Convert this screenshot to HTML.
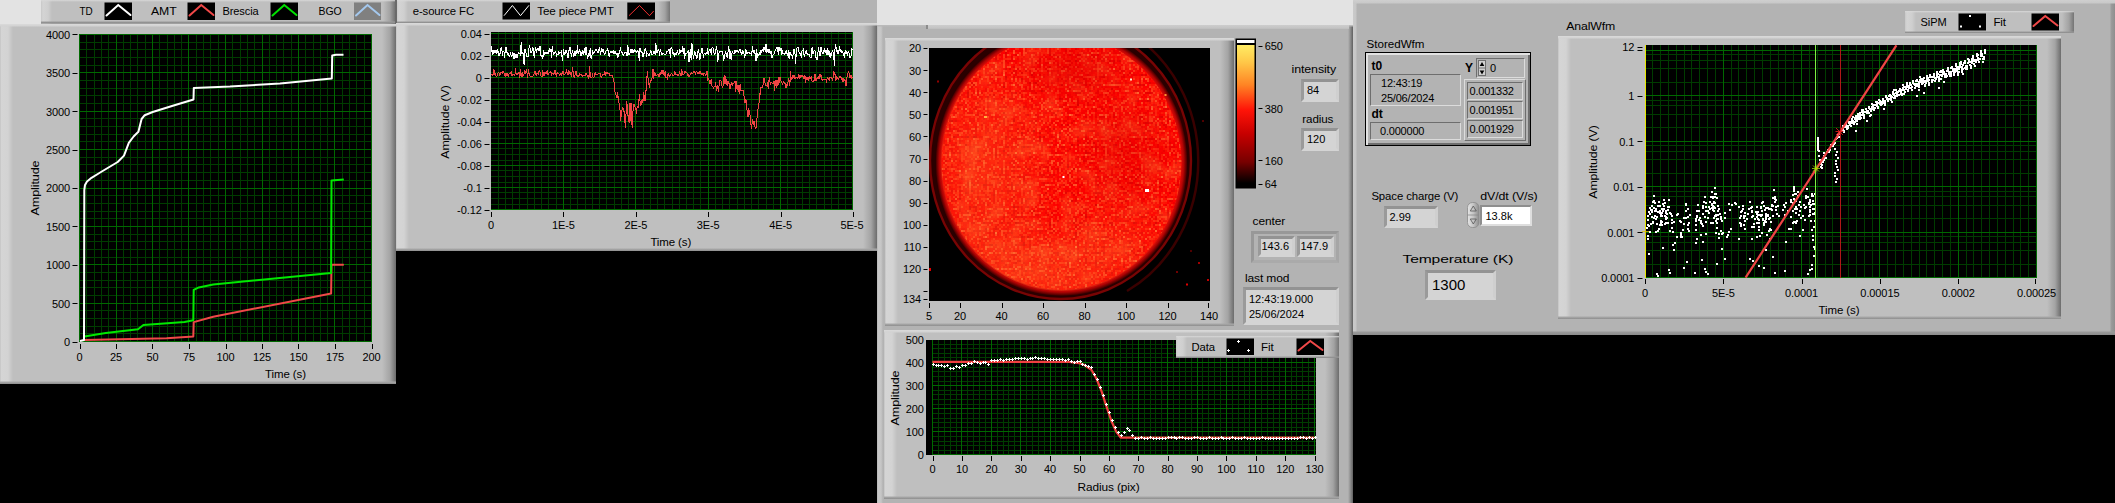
<!DOCTYPE html><html><head><meta charset="utf-8"><title>LabVIEW panels</title><style>
*{box-sizing:border-box}
html,body{margin:0;padding:0}
body{width:2115px;height:503px;background:#000;position:relative;overflow:hidden;font-family:"Liberation Sans", sans-serif;font-size:11px;color:#000}
.abs{position:absolute}
.frame{position:absolute;background:
 linear-gradient(to bottom,#dadada 0,#d2d2d2 2px,rgba(210,210,210,0) 3px) top/100% 3px no-repeat,
 linear-gradient(to top,#8e8e8e 0,#a8a8a8 2px,rgba(168,168,168,0) 3px) bottom/100% 3px no-repeat,
 linear-gradient(to right,#bdbdbd 0,#d5d5d5 1px,#d3d3d3 8px,#bfbfbf 13px,#bfbfbf calc(100% - 14px),#a4a4a4 calc(100% - 6px),#6c6c6c 100%);}
.legend{position:absolute;background:
 linear-gradient(to bottom,#d8d8d8 0,rgba(216,216,216,0) 2px) top/100% 2px no-repeat,
 linear-gradient(to top,#808080 0,#9a9a9a 1.5px,rgba(168,168,168,0) 2.5px) bottom/100% 2.5px no-repeat,
 linear-gradient(to right,#c8c8c8 0,#d4d4d4 2px,#cfcfcf 7px,#bfbfbf 11px,#bfbfbf calc(100% - 12px),#a2a2a2 calc(100% - 5px),#747474 100%);}
.ind{position:absolute;border:3.5px solid;border-color:#939393 #cfcfcf #d4d4d4 #9a9a9a;background:#d4d4d4;font-size:11px;line-height:1;white-space:nowrap}
.thin{position:absolute;letter-spacing:-0.2px;border:1px solid;border-color:#6e6e6e #dcdcdc #dcdcdc #6e6e6e;white-space:nowrap}
.lbl{position:absolute;white-space:nowrap;line-height:1}
svg{position:absolute;left:0;top:0;overflow:visible}
svg text{font-family:"Liberation Sans", sans-serif;font-size:11px;fill:#000;letter-spacing:-0.1px}
</style></head><body><div class="abs" style="left:0px;top:0px;width:41px;height:24px;background:#e3e3e3"></div><div class="abs" style="left:396px;top:0px;width:481px;height:23px;background:#b3b3b3"></div><div class="abs" style="left:877px;top:0px;width:476px;height:26px;background:#e3e3e3"></div><div class="frame" style="left:0px;top:23.5px;width:396px;height:360.5px;"></div><div class="legend" style="left:41px;top:0px;width:354px;height:23.5px;"></div><div class="abs" style="left:395px;top:0px;width:1.5px;height:24px;background:#6a6a6a"></div><svg width="2115" height="503" viewBox="0 0 2115 503"><rect x="104.5" y="2.5" width="27.5" height="17.5" fill="#000"/><polyline points="106.5,15.5 118.25,5.0 130.5,15.0" fill="none" stroke="#fff" stroke-width="2" stroke-linecap="round"/><rect x="187.5" y="2.5" width="27.5" height="17.5" fill="#000"/><polyline points="189.5,15.5 201.25,5.0 213.5,15.0" fill="none" stroke="#f04848" stroke-width="2" stroke-linecap="round"/><rect x="270.5" y="2.5" width="27.5" height="17.5" fill="#000"/><polyline points="272.5,15.5 284.25,5.0 296.5,15.0" fill="none" stroke="#00e000" stroke-width="2" stroke-linecap="round"/><rect x="354" y="2.5" width="27" height="17.5" fill="#808080"/><polyline points="356,15.5 367.5,5.0 379.5,15.0" fill="none" stroke="#a4c8ee" stroke-width="2" stroke-linecap="round"/><text x="92.5" y="15" text-anchor="end" textLength="13" lengthAdjust="spacingAndGlyphs">TD</text><text x="176.5" y="15" text-anchor="end" textLength="25.5" lengthAdjust="spacingAndGlyphs">AMT</text><text x="258.6" y="15" text-anchor="end" textLength="36.2" lengthAdjust="spacingAndGlyphs">Brescia</text><text x="341.6" y="15" text-anchor="end" textLength="23" lengthAdjust="spacingAndGlyphs">BGO</text><rect x="79" y="34" width="293" height="308" fill="#000"/><g shape-rendering="crispEdges" stroke-width="1"><path d="M79.5 34V342M86.5 34V342M94.5 34V342M101.5 34V342M108.5 34V342M116.5 34V342M123.5 34V342M130.5 34V342M137.5 34V342M145.5 34V342M152.5 34V342M159.5 34V342M167.5 34V342M174.5 34V342M181.5 34V342M188.5 34V342M196.5 34V342M203.5 34V342M210.5 34V342M218.5 34V342M225.5 34V342M232.5 34V342M240.5 34V342M247.5 34V342M254.5 34V342M262.5 34V342M269.5 34V342M276.5 34V342M283.5 34V342M291.5 34V342M298.5 34V342M305.5 34V342M313.5 34V342M320.5 34V342M327.5 34V342M334.5 34V342M342.5 34V342M349.5 34V342M356.5 34V342M364.5 34V342M371.5 34V342M79 341.5H372M79 333.5H372M79 326.5H372M79 318.5H372M79 310.5H372M79 303.5H372M79 295.5H372M79 287.5H372M79 280.5H372M79 272.5H372M79 264.5H372M79 257.5H372M79 249.5H372M79 241.5H372M79 234.5H372M79 226.5H372M79 218.5H372M79 211.5H372M79 203.5H372M79 195.5H372M79 188.5H372M79 180.5H372M79 172.5H372M79 164.5H372M79 157.5H372M79 149.5H372M79 141.5H372M79 134.5H372M79 126.5H372M79 118.5H372M79 111.5H372M79 103.5H372M79 95.5H372M79 88.5H372M79 80.5H372M79 72.5H372M79 65.5H372M79 57.5H372M79 49.5H372M79 42.5H372M79 34.5H372" stroke="#003c00" fill="none"/><path d="M79.5 34V342M116.5 34V342M152.5 34V342M188.5 34V342M225.5 34V342M262.5 34V342M298.5 34V342M334.5 34V342M371.5 34V342M79 341.5H372M79 303.5H372M79 264.5H372M79 226.5H372M79 188.5H372M79 149.5H372M79 111.5H372M79 72.5H372M79 34.5H372" stroke="#006800" fill="none"/></g><polyline points="84.3,340 166.6,338.2 193.3,336.4 193.7,322.1 213.2,316.7 331.1,293.5 331.5,264.8 343.8,264.8" fill="none" stroke="#f04848" stroke-width="2" stroke-linejoin="round" /><polyline points="84.3,336.4 105.8,332.9 138,329.3 143.4,325 184.5,322.1 193.3,320.3 193.7,289.9 198.8,287.4 213.2,284.5 331.1,273.1 331.5,180.5 343.8,179.5" fill="none" stroke="#00e800" stroke-width="2" stroke-linejoin="round" /><polyline points="80,341 84,340 84.3,190 85,185 87,181.5 91.5,177.8 99.4,173 101.8,171.5 117.7,162 124,155.6 128.8,142.9 133.6,136.5 138.4,131.8 141.6,119 144.7,115.2 152.7,112 172,106 193.5,99.5 193.8,88 230,86.6 280,83.5 331.8,78.5 332.2,55.5 336,54.7 343.5,54.7" fill="none" stroke="#fff" stroke-width="2" stroke-linejoin="round" /><text x="70" y="345.9" text-anchor="end">0</text><path d="M72.5 342.5H77.5" stroke="#000" stroke-width="1"/><text x="70" y="307.525" text-anchor="end">500</text><path d="M72.5 303.5H77.5" stroke="#000" stroke-width="1"/><text x="70" y="269.15" text-anchor="end">1000</text><path d="M72.5 265.5H77.5" stroke="#000" stroke-width="1"/><text x="70" y="230.775" text-anchor="end">1500</text><path d="M72.5 226.5H77.5" stroke="#000" stroke-width="1"/><text x="70" y="192.4" text-anchor="end">2000</text><path d="M72.5 188.5H77.5" stroke="#000" stroke-width="1"/><text x="70" y="154.025" text-anchor="end">2500</text><path d="M72.5 150.5H77.5" stroke="#000" stroke-width="1"/><text x="70" y="115.65" text-anchor="end">3000</text><path d="M72.5 111.5H77.5" stroke="#000" stroke-width="1"/><text x="70" y="77.275" text-anchor="end">3500</text><path d="M72.5 73.5H77.5" stroke="#000" stroke-width="1"/><text x="70" y="38.9" text-anchor="end">4000</text><path d="M72.5 34.5H77.5" stroke="#000" stroke-width="1"/><text x="79.5" y="361" text-anchor="middle">0</text><path d="M80.5 344V349" stroke="#000" stroke-width="1"/><text x="116.0" y="361" text-anchor="middle">25</text><path d="M116.5 344V349" stroke="#000" stroke-width="1"/><text x="152.5" y="361" text-anchor="middle">50</text><path d="M152.5 344V349" stroke="#000" stroke-width="1"/><text x="189.0" y="361" text-anchor="middle">75</text><path d="M189.5 344V349" stroke="#000" stroke-width="1"/><text x="225.5" y="361" text-anchor="middle">100</text><path d="M226.5 344V349" stroke="#000" stroke-width="1"/><text x="262.0" y="361" text-anchor="middle">125</text><path d="M262.5 344V349" stroke="#000" stroke-width="1"/><text x="298.5" y="361" text-anchor="middle">150</text><path d="M298.5 344V349" stroke="#000" stroke-width="1"/><text x="335.0" y="361" text-anchor="middle">175</text><path d="M335.5 344V349" stroke="#000" stroke-width="1"/><text x="371.5" y="361" text-anchor="middle">200</text><path d="M372.5 344V349" stroke="#000" stroke-width="1"/><text x="285.5" y="378" text-anchor="middle" textLength="40.8" lengthAdjust="spacingAndGlyphs">Time (s)</text><text x="39.3" y="188" text-anchor="middle" textLength="55" lengthAdjust="spacingAndGlyphs" transform="rotate(-90 39.3 188)">Amplitude</text></svg><div class="frame" style="left:396px;top:23px;width:481px;height:228px;"></div><div class="legend" style="left:397px;top:0px;width:273px;height:23px;"></div><svg width="2115" height="503" viewBox="0 0 2115 503"><rect x="502.5" y="2.5" width="27.5" height="17" fill="#000"/><polyline points="504,15.7 512.4,5.5 520.5,15.7 529,5.3" fill="none" stroke="#fff" stroke-width="1"/><rect x="627.3" y="2.5" width="27.7" height="17" fill="#000"/><polyline points="629,15.7 639.5,5.5 649.5,15.7 653.7,11" fill="none" stroke="#f03030" stroke-width="1"/><text x="412.7" y="15" text-anchor="start" textLength="61.3" lengthAdjust="spacingAndGlyphs">e-source FC</text><text x="537.2" y="15" text-anchor="start" textLength="76.5" lengthAdjust="spacingAndGlyphs">Tee piece PMT</text><rect x="491" y="32" width="362" height="178" fill="#000"/><g shape-rendering="crispEdges" stroke-width="1"><path d="M498.5 32V210M505.5 32V210M512.5 32V210M519.5 32V210M527.5 32V210M534.5 32V210M541.5 32V210M548.5 32V210M556.5 32V210M563.5 32V210M570.5 32V210M577.5 32V210M585.5 32V210M592.5 32V210M599.5 32V210M606.5 32V210M614.5 32V210M621.5 32V210M628.5 32V210M635.5 32V210M643.5 32V210M650.5 32V210M657.5 32V210M664.5 32V210M672.5 32V210M679.5 32V210M686.5 32V210M693.5 32V210M700.5 32V210M708.5 32V210M715.5 32V210M722.5 32V210M729.5 32V210M737.5 32V210M744.5 32V210M751.5 32V210M758.5 32V210M766.5 32V210M773.5 32V210M780.5 32V210M787.5 32V210M795.5 32V210M802.5 32V210M809.5 32V210M816.5 32V210M824.5 32V210M831.5 32V210M838.5 32V210M845.5 32V210M852.5 32V210M491 33.5H853M491 38.5H853M491 44.5H853M491 50.5H853M491 55.5H853M491 60.5H853M491 66.5H853M491 72.5H853M491 77.5H853M491 82.5H853M491 88.5H853M491 94.5H853M491 99.5H853M491 104.5H853M491 110.5H853M491 116.5H853M491 121.5H853M491 126.5H853M491 132.5H853M491 138.5H853M491 143.5H853M491 148.5H853M491 154.5H853M491 160.5H853M491 165.5H853M491 170.5H853M491 176.5H853M491 182.5H853M491 187.5H853M491 192.5H853M491 198.5H853M491 204.5H853M491 209.5H853" stroke="#003c00" fill="none"/><path d="M563.5 32V210M635.5 32V210M708.5 32V210M780.5 32V210M852.5 32V210M491 33.5H853M491 55.5H853M491 77.5H853M491 99.5H853M491 121.5H853M491 143.5H853M491 165.5H853M491 187.5H853M491 209.5H853" stroke="#006800" fill="none"/></g><g clip-path="url(#c2)"><clipPath id="c2"><rect x="491" y="32" width="362" height="178"/></clipPath><polyline points="491.0,75 491.7,74 492.4,75 493.2,75 493.9,69 494.6,75 495.3,73 496.0,76 496.8,77 497.5,73 498.2,73 498.9,72 499.6,76 500.4,74 501.1,72 501.8,73 502.5,73 503.2,71 504.0,73 504.7,75 505.4,77 506.1,73 506.8,76 507.6,74 508.3,77 509.0,74 509.7,73 510.4,74 511.2,71 511.9,76 512.6,75 513.3,74 514.0,75 514.8,76 515.5,69 516.2,75 516.9,73 517.6,75 518.4,73 519.1,72 519.8,78 520.5,70 521.2,74 522.0,77 522.7,72 523.4,76 524.1,74 524.8,70 525.6,74 526.3,69 527.0,73 527.7,78 528.4,69 529.2,74 529.9,76 530.6,76 531.3,76 532.0,76 532.8,77 533.5,74 534.2,74 534.9,71 535.6,73 536.4,76 537.1,73 537.8,73 538.5,75 539.2,70 540.0,72 540.7,76 541.4,76 542.1,77 542.8,70 543.6,76 544.3,76 545.0,72 545.7,74 546.4,74 547.2,70 547.9,75 548.6,73 549.3,73 550.0,72 550.8,71 551.5,76 552.2,73 552.9,74 553.6,75 554.4,72 555.1,70 555.8,74 556.5,77 557.2,72 558.0,74 558.7,73 559.4,75 560.1,75 560.8,73 561.6,75 562.3,73 563.0,71 563.7,75 564.4,74 565.2,74 565.9,73 566.6,70 567.3,74 568.0,75 568.8,70 569.5,74 570.2,72 570.9,75 571.6,77 572.4,67 573.1,72 573.8,76 574.5,78 575.2,74 576.0,71 576.7,75 577.4,77 578.1,75 578.8,77 579.6,74 580.3,75 581.0,74 581.7,75 582.4,76 583.2,76 583.9,75 584.6,76 585.3,76 586.0,73 586.8,75 587.5,76 588.2,75 588.9,79 589.6,66 590.4,77 591.1,77 591.8,78 592.5,74 593.2,78 594.0,77 594.7,74 595.4,73 596.1,75 596.8,74 597.6,75 598.3,73 599.0,74 599.7,73 600.4,73 601.2,78 601.9,76 602.6,74 603.3,74 604.0,75 604.8,71 605.5,76 606.2,73 606.9,72 607.6,74 608.4,74 609.1,73 609.8,76 610.5,75 611.2,75 612.0,75 612.7,76 613.4,81 614.1,82 614.8,92 615.6,93 616.3,96 617.0,98 617.7,92 618.4,101 619.2,104 619.9,108 620.6,121 621.3,114 622.0,110 622.8,107 623.5,111 624.2,111 624.9,122 625.6,128 626.4,101 627.1,104 627.8,114 628.5,119 629.2,123 630.0,103 630.7,121 631.4,103 632.1,128 632.8,114 633.6,104 634.3,104 635.0,107 635.7,107 636.4,114 637.2,106 637.9,108 638.6,107 639.3,94 640.0,101 640.8,106 641.5,103 642.2,99 642.9,103 643.6,92 644.4,97 645.1,101 645.8,90 646.5,90 647.2,71 648.0,78 648.7,82 649.4,88 650.1,82 650.8,81 651.6,79 652.3,77 653.0,69 653.7,79 654.4,72 655.2,73 655.9,76 656.6,75 657.3,75 658.0,74 658.8,77 659.5,76 660.2,72 660.9,75 661.6,70 662.4,74 663.1,70 663.8,75 664.5,75 665.2,71 666.0,78 666.7,77 667.4,80 668.1,73 668.8,76 669.6,76 670.3,75 671.0,74 671.7,73 672.4,75 673.2,75 673.9,76 674.6,72 675.3,73 676.0,75 676.8,74 677.5,75 678.2,76 678.9,74 679.6,72 680.4,74 681.1,76 681.8,69 682.5,75 683.2,74 684.0,74 684.7,71 685.4,72 686.1,72 686.8,72 687.6,76 688.3,74 689.0,77 689.7,75 690.4,75 691.2,72 691.9,74 692.6,73 693.3,73 694.0,71 694.8,72 695.5,75 696.2,71 696.9,72 697.6,74 698.4,72 699.1,74 699.8,71 700.5,73 701.2,73 702.0,75 702.7,73 703.4,76 704.1,73 704.8,73 705.6,76 706.3,74 707.0,71 707.7,81 708.4,79 709.2,80 709.9,84 710.6,81 711.3,79 712.0,86 712.8,86 713.5,89 714.2,86 714.9,87 715.6,82 716.4,91 717.1,85 717.8,88 718.5,92 719.2,84 720.0,80 720.7,80 721.4,83 722.1,86 722.8,88 723.6,81 724.3,75 725.0,84 725.7,76 726.4,82 727.2,86 727.9,81 728.6,84 729.3,83 730.0,89 730.8,85 731.5,83 732.2,86 732.9,83 733.6,84 734.4,82 735.1,81 735.8,92 736.5,82 737.2,90 738.0,85 738.7,90 739.4,94 740.1,84 740.8,91 741.6,90 742.3,90 743.0,90 743.7,91 744.4,102 745.2,103 745.9,99 746.6,108 747.3,112 748.0,117 748.8,108 749.5,115 750.2,115 750.9,124 751.6,129 752.4,119 753.1,125 753.8,121 754.5,123 755.2,128 756.0,128 756.7,120 757.4,115 758.1,108 758.8,107 759.6,93 760.3,95 761.0,87 761.7,88 762.4,87 763.2,84 763.9,78 764.6,80 765.3,85 766.0,85 766.8,86 767.5,83 768.2,89 768.9,81 769.6,78 770.4,85 771.1,82 771.8,83 772.5,83 773.2,84 774.0,81 774.7,91 775.4,81 776.1,80 776.8,88 777.6,80 778.3,85 779.0,77 779.7,83 780.4,77 781.2,82 781.9,83 782.6,85 783.3,81 784.0,82 784.8,82 785.5,87 786.2,88 786.9,84 787.6,86 788.4,78 789.1,80 789.8,86 790.5,72 791.2,79 792.0,79 792.7,75 793.4,78 794.1,75 794.8,79 795.6,77 796.3,77 797.0,77 797.7,79 798.4,74 799.2,79 799.9,75 800.6,78 801.3,75 802.0,77 802.8,75 803.5,78 804.2,79 804.9,75 805.6,83 806.4,77 807.1,77 807.8,80 808.5,80 809.2,76 810.0,79 810.7,78 811.4,77 812.1,82 812.8,81 813.6,81 814.3,80 815.0,74 815.7,81 816.4,81 817.2,77 817.9,79 818.6,77 819.3,79 820.0,74 820.8,77 821.5,76 822.2,81 822.9,79 823.6,80 824.4,79 825.1,79 825.8,79 826.5,83 827.2,77 828.0,78 828.7,79 829.4,81 830.1,77 830.8,77 831.6,77 832.3,81 833.0,78 833.7,71 834.4,74 835.2,74 835.9,81 836.6,77 837.3,78 838.0,79 838.8,79 839.5,76 840.2,76 840.9,77 841.6,80 842.4,78 843.1,82 843.8,78 844.5,81 845.2,80 846.0,86 846.7,80 847.4,73 848.1,73 848.8,71 849.6,78 850.3,77 851.0,75 851.7,79 852.4,77" fill="none" stroke="#f04444" stroke-width="1" stroke-linejoin="round" shape-rendering="crispEdges"/><polyline points="491.0,52 491.7,46 492.4,54 493.2,54 493.9,50 494.6,52 495.3,53 496.0,50 496.8,54 497.5,50 498.2,52 498.9,56 499.6,55 500.4,52 501.1,47 501.8,49 502.5,56 503.2,51 504.0,52 504.7,58 505.4,48 506.1,47 506.8,52 507.6,54 508.3,53 509.0,56 509.7,57 510.4,52 511.2,56 511.9,56 512.6,53 513.3,54 514.0,59 514.8,53 515.5,58 516.2,54 516.9,58 517.6,56 518.4,52 519.1,53 519.8,54 520.5,55 521.2,42 522.0,54 522.7,52 523.4,55 524.1,65 524.8,49 525.6,51 526.3,55 527.0,57 527.7,56 528.4,57 529.2,45 529.9,47 530.6,53 531.3,53 532.0,51 532.8,47 533.5,52 534.2,58 534.9,52 535.6,48 536.4,53 537.1,48 537.8,50 538.5,49 539.2,51 540.0,46 540.7,55 541.4,57 542.1,55 542.8,59 543.6,50 544.3,54 545.0,54 545.7,52 546.4,52 547.2,54 547.9,52 548.6,54 549.3,48 550.0,52 550.8,49 551.5,58 552.2,46 552.9,51 553.6,55 554.4,53 555.1,52 555.8,51 556.5,57 557.2,54 558.0,55 558.7,51 559.4,53 560.1,53 560.8,52 561.6,51 562.3,61 563.0,55 563.7,49 564.4,55 565.2,53 565.9,50 566.6,51 567.3,54 568.0,58 568.8,52 569.5,47 570.2,47 570.9,53 571.6,57 572.4,50 573.1,53 573.8,57 574.5,52 575.2,56 576.0,51 576.7,54 577.4,45 578.1,54 578.8,52 579.6,50 580.3,52 581.0,56 581.7,54 582.4,50 583.2,55 583.9,51 584.6,49 585.3,55 586.0,47 586.8,53 587.5,59 588.2,53 588.9,57 589.6,53 590.4,48 591.1,59 591.8,57 592.5,51 593.2,53 594.0,53 594.7,52 595.4,50 596.1,49 596.8,50 597.6,53 598.3,53 599.0,49 599.7,47 600.4,55 601.2,51 601.9,48 602.6,52 603.3,49 604.0,53 604.8,55 605.5,52 606.2,51 606.9,50 607.6,49 608.4,52 609.1,57 609.8,53 610.5,52 611.2,51 612.0,53 612.7,52 613.4,51 614.1,54 614.8,51 615.6,53 616.3,55 617.0,53 617.7,58 618.4,55 619.2,53 619.9,51 620.6,48 621.3,53 622.0,52 622.8,54 623.5,56 624.2,53 624.9,52 625.6,52 626.4,52 627.1,56 627.8,45 628.5,53 629.2,55 630.0,53 630.7,49 631.4,53 632.1,49 632.8,53 633.6,52 634.3,49 635.0,52 635.7,50 636.4,53 637.2,50 637.9,51 638.6,54 639.3,61 640.0,48 640.8,51 641.5,53 642.2,52 642.9,57 643.6,54 644.4,53 645.1,48 645.8,48 646.5,57 647.2,53 648.0,54 648.7,56 649.4,56 650.1,53 650.8,50 651.6,54 652.3,55 653.0,54 653.7,51 654.4,52 655.2,55 655.9,43 656.6,53 657.3,53 658.0,50 658.8,49 659.5,56 660.2,49 660.9,52 661.6,54 662.4,55 663.1,53 663.8,54 664.5,54 665.2,55 666.0,54 666.7,51 667.4,52 668.1,51 668.8,49 669.6,49 670.3,58 671.0,48 671.7,47 672.4,51 673.2,55 673.9,52 674.6,57 675.3,53 676.0,55 676.8,53 677.5,51 678.2,54 678.9,55 679.6,49 680.4,53 681.1,50 681.8,52 682.5,47 683.2,54 684.0,48 684.7,59 685.4,53 686.1,53 686.8,53 687.6,52 688.3,50 689.0,62 689.7,53 690.4,50 691.2,60 691.9,43 692.6,50 693.3,59 694.0,55 694.8,51 695.5,56 696.2,55 696.9,59 697.6,53 698.4,49 699.1,54 699.8,60 700.5,57 701.2,52 702.0,48 702.7,50 703.4,58 704.1,53 704.8,54 705.6,54 706.3,52 707.0,54 707.7,48 708.4,55 709.2,50 709.9,49 710.6,51 711.3,55 712.0,48 712.8,47 713.5,51 714.2,54 714.9,54 715.6,53 716.4,46 717.1,51 717.8,62 718.5,54 719.2,53 720.0,51 720.7,51 721.4,51 722.1,51 722.8,53 723.6,61 724.3,57 725.0,54 725.7,51 726.4,55 727.2,58 727.9,53 728.6,46 729.3,51 730.0,59 730.8,51 731.5,60 732.2,51 732.9,53 733.6,53 734.4,54 735.1,50 735.8,53 736.5,51 737.2,50 738.0,52 738.7,52 739.4,49 740.1,49 740.8,52 741.6,54 742.3,50 743.0,54 743.7,51 744.4,58 745.2,55 745.9,49 746.6,53 747.3,54 748.0,52 748.8,52 749.5,54 750.2,53 750.9,54 751.6,56 752.4,46 753.1,53 753.8,50 754.5,52 755.2,54 756.0,61 756.7,49 757.4,58 758.1,56 758.8,55 759.6,53 760.3,55 761.0,50 761.7,53 762.4,49 763.2,52 763.9,47 764.6,47 765.3,52 766.0,44 766.8,53 767.5,50 768.2,49 768.9,53 769.6,50 770.4,54 771.1,51 771.8,58 772.5,57 773.2,54 774.0,54 774.7,52 775.4,50 776.1,49 776.8,47 777.6,48 778.3,55 779.0,47 779.7,51 780.4,50 781.2,48 781.9,55 782.6,51 783.3,54 784.0,53 784.8,55 785.5,53 786.2,50 786.9,53 787.6,56 788.4,50 789.1,59 789.8,52 790.5,53 791.2,55 792.0,56 792.7,59 793.4,51 794.1,49 794.8,50 795.6,64 796.3,52 797.0,48 797.7,47 798.4,48 799.2,53 799.9,53 800.6,53 801.3,58 802.0,51 802.8,50 803.5,49 804.2,57 804.9,54 805.6,52 806.4,50 807.1,54 807.8,54 808.5,54 809.2,54 810.0,57 810.7,58 811.4,58 812.1,47 812.8,54 813.6,53 814.3,50 815.0,51 815.7,57 816.4,58 817.2,60 817.9,53 818.6,47 819.3,54 820.0,56 820.8,47 821.5,48 822.2,53 822.9,53 823.6,53 824.4,48 825.1,53 825.8,50 826.5,55 827.2,48 828.0,55 828.7,50 829.4,52 830.1,58 830.8,53 831.6,55 832.3,50 833.0,52 833.7,54 834.4,66 835.2,44 835.9,46 836.6,52 837.3,50 838.0,54 838.8,51 839.5,47 840.2,52 840.9,49 841.6,53 842.4,52 843.1,53 843.8,55 844.5,58 845.2,50 846.0,54 846.7,51 847.4,56 848.1,52 848.8,51 849.6,58 850.3,57 851.0,56 851.7,48 852.4,50" fill="none" stroke="#fff" stroke-width="1" stroke-linejoin="round" shape-rendering="crispEdges"/></g><text x="481.7" y="37.9" text-anchor="end">0.04</text><path d="M484.5 34.5H489.5" stroke="#000" stroke-width="1"/><text x="481.7" y="59.9" text-anchor="end">0.02</text><path d="M484.5 56.5H489.5" stroke="#000" stroke-width="1"/><text x="481.7" y="81.9" text-anchor="end">0</text><path d="M484.5 78.5H489.5" stroke="#000" stroke-width="1"/><text x="481.7" y="103.9" text-anchor="end">-0.02</text><path d="M484.5 100.5H489.5" stroke="#000" stroke-width="1"/><text x="481.7" y="125.9" text-anchor="end">-0.04</text><path d="M484.5 122.5H489.5" stroke="#000" stroke-width="1"/><text x="481.7" y="147.9" text-anchor="end">-0.06</text><path d="M484.5 144.5H489.5" stroke="#000" stroke-width="1"/><text x="481.7" y="169.9" text-anchor="end">-0.08</text><path d="M484.5 166.5H489.5" stroke="#000" stroke-width="1"/><text x="481.7" y="191.9" text-anchor="end">-0.1</text><path d="M484.5 188.5H489.5" stroke="#000" stroke-width="1"/><text x="481.7" y="213.9" text-anchor="end">-0.12</text><path d="M484.5 210.5H489.5" stroke="#000" stroke-width="1"/><text x="491.0" y="229.2" text-anchor="middle">0</text><path d="M491.5 212V217" stroke="#000" stroke-width="1"/><text x="563.4" y="229.2" text-anchor="middle">1E-5</text><path d="M563.5 212V217" stroke="#000" stroke-width="1"/><text x="635.8" y="229.2" text-anchor="middle">2E-5</text><path d="M636.5 212V217" stroke="#000" stroke-width="1"/><text x="708.2" y="229.2" text-anchor="middle">3E-5</text><path d="M708.5 212V217" stroke="#000" stroke-width="1"/><text x="780.6" y="229.2" text-anchor="middle">4E-5</text><path d="M781.5 212V217" stroke="#000" stroke-width="1"/><text x="852.0" y="229.2" text-anchor="middle">5E-5</text><path d="M853.5 212V217" stroke="#000" stroke-width="1"/><text x="670.8" y="245.7" text-anchor="middle" textLength="40.8" lengthAdjust="spacingAndGlyphs">Time (s)</text><text x="448.5" y="122" text-anchor="middle" textLength="73.4" lengthAdjust="spacingAndGlyphs" transform="rotate(-90 448.5 122)">Amplitude (V)</text></svg><div class="abs" style="left:877px;top:25px;width:476px;height:478px;background:linear-gradient(to bottom,#bcbcbc 0,#b8b8b8 1px,rgba(184,184,184,0) 2px) top/100% 2px no-repeat,linear-gradient(to right,#b0b0b0 0,#c8c8c8 1px,#c6c6c6 4px,#b3b3b3 6px,#b3b3b3 calc(100% - 5px),#8c8c8c calc(100% - 2.5px),#606060 100%)"></div><div class="abs" style="left:928px;top:25px;width:421px;height:4px;background:linear-gradient(to bottom,#cdcdcd 0,#c4c4c4 3px,#bcbcbc 4px)"></div><div class="abs" style="left:926px;top:25px;width:2px;height:4px;background:#8c8c8c"></div><div class="frame" style="left:885px;top:38px;width:349px;height:288px;"></div><div class="frame" style="left:884px;top:330px;width:455px;height:169px;"></div><svg width="2115" height="503" viewBox="0 0 2115 503"><defs><clipPath id="c3"><rect x="929" y="48" width="281" height="253"/></clipPath><radialGradient id="disc" cx="0.5" cy="0.5" r="0.5"><stop offset="0" stop-color="#fa0a04"/><stop offset="0.90" stop-color="#f80804"/><stop offset="0.945" stop-color="#e60c08"/><stop offset="0.97" stop-color="#b40404"/><stop offset="0.99" stop-color="#600000"/><stop offset="1" stop-color="#2c0000"/></radialGradient>
<radialGradient id="glow" cx="0.5" cy="0.5" r="0.5"><stop offset="0.80" stop-color="#2c0000"/><stop offset="0.90" stop-color="#200000"/><stop offset="0.96" stop-color="#0c0000"/><stop offset="1" stop-color="#000"/></radialGradient>
<radialGradient id="warm"><stop offset="0" stop-color="#ff7a30" stop-opacity="0.38"/><stop offset="1" stop-color="#ff7a30" stop-opacity="0"/></radialGradient>
<radialGradient id="cool"><stop offset="0" stop-color="#d80000" stop-opacity="0.4"/><stop offset="1" stop-color="#d80000" stop-opacity="0"/></radialGradient>
<filter id="nz" filterUnits="userSpaceOnUse" x="929" y="48" width="280" height="253" color-interpolation-filters="sRGB"><feTurbulence type="fractalNoise" baseFrequency="0.39 0.37" numOctaves="2" seed="11"/><feColorMatrix type="matrix" values="0.55 0 0 0 0.75  1.25 0 0 0 -0.59  0.7 0 0 0 -0.36  0 0 0 0 1" result="c"/><feFlood x="929" y="48" width="1" height="1" flood-color="#000" result="px"/><feComposite in="px" in2="px" operator="over" x="929" y="48" width="2" height="2" result="t0"/><feTile in="t0" result="tiles"/><feComposite in="c" in2="tiles" operator="in" result="s"/><feOffset in="s" dx="1" dy="0" result="s1"/><feOffset in="s" dx="0" dy="1" result="s2"/><feOffset in="s" dx="1" dy="1" result="s3"/><feMerge result="m"><feMergeNode in="s"/><feMergeNode in="s1"/><feMergeNode in="s2"/><feMergeNode in="s3"/></feMerge><feComposite in="m" in2="SourceGraphic" operator="in"/></filter>
<filter id="lf" filterUnits="userSpaceOnUse" x="929" y="48" width="280" height="253" color-interpolation-filters="sRGB"><feTurbulence type="fractalNoise" baseFrequency="0.05" numOctaves="2" seed="5"/><feColorMatrix type="matrix" values="0 0 0 0 1  0 0 0 0 0.42  0 0 0 0 0.18  1.1 0 0 0 -0.50"/><feComposite in2="SourceGraphic" operator="in"/></filter><linearGradient id="cbar" x1="0" y1="0" x2="0" y2="1"><stop offset="0" stop-color="#ffec64"/><stop offset="0.12" stop-color="#ffc848"/><stop offset="0.28" stop-color="#ff8424"/><stop offset="0.455" stop-color="#ff1408"/><stop offset="0.62" stop-color="#c80000"/><stop offset="0.82" stop-color="#780000"/><stop offset="0.97" stop-color="#000"/><stop offset="1" stop-color="#000"/></linearGradient></defs><rect x="929" y="48" width="281" height="253" fill="#000"/><g clip-path="url(#c3)"><ellipse cx="1060.5" cy="160.8" rx="131" ry="138.7" fill="#2a0000"/><path d="M1127 31 A136.5 148 0 0 1 1127 291" fill="none" stroke="#3a0000" stroke-width="2.5"/><ellipse cx="1060.5" cy="160.8" rx="130.5" ry="138.2" fill="none" stroke="#780404" stroke-width="2.4"/><ellipse cx="1061.5" cy="162.5" rx="126" ry="133.5" fill="url(#disc)"/><ellipse cx="1061.5" cy="162.5" rx="120" ry="127.5" fill="#fff" filter="url(#nz)" opacity="0.92"/><g clip-path="url(#cd)"><clipPath id="cd"><ellipse cx="1061.5" cy="162.5" rx="121" ry="128.5"/></clipPath><ellipse cx="1061.5" cy="162.5" rx="120" ry="127.5" fill="#fff" filter="url(#lf)"/><ellipse cx="985" cy="175" rx="75" ry="125" fill="url(#warm)" opacity="0.85"/><ellipse cx="1040" cy="272" rx="125" ry="55" fill="url(#warm)"/><ellipse cx="1120" cy="235" rx="60" ry="45" fill="url(#warm)" opacity="0.5"/><ellipse cx="1075" cy="70" rx="70" ry="40" fill="url(#cool)"/><ellipse cx="1125" cy="150" rx="55" ry="70" fill="url(#cool)" opacity="0.8"/></g><rect x="1062.5" y="176" width="2" height="2" fill="#fff"/><rect x="1145" y="189" width="4" height="3" fill="#fff"/><rect x="1130" y="78.5" width="2" height="2" fill="#fff4d0"/><rect x="1164.5" y="94" width="2" height="2" fill="#ff9030"/><rect x="984" y="116" width="3" height="2" fill="#ffb040"/><rect x="937" y="80.5" width="2" height="2" fill="#900000"/><rect x="1186" y="283.5" width="2" height="2" fill="#e00000"/><rect x="1198" y="262" width="2" height="2" fill="#a00000"/><rect x="1207" y="279" width="2" height="2" fill="#c00000"/><rect x="929" y="268" width="2" height="3" fill="#e00000"/><rect x="1176" y="271" width="2" height="2" fill="#700000"/><rect x="1190" y="250" width="2" height="2" fill="#500000"/><rect x="1202" y="120" width="2" height="2" fill="#500000"/></g><text x="921" y="52.4" text-anchor="end">20</text><path d="M923.5 48.5H927.5" stroke="#000" stroke-width="1"/><text x="921" y="74.50500000000001" text-anchor="end">30</text><path d="M923.5 70.5H927.5" stroke="#000" stroke-width="1"/><text x="921" y="96.61000000000001" text-anchor="end">40</text><path d="M923.5 92.5H927.5" stroke="#000" stroke-width="1"/><text x="921" y="118.715" text-anchor="end">50</text><path d="M923.5 114.5H927.5" stroke="#000" stroke-width="1"/><text x="921" y="140.82000000000002" text-anchor="end">60</text><path d="M923.5 136.5H927.5" stroke="#000" stroke-width="1"/><text x="921" y="162.925" text-anchor="end">70</text><path d="M923.5 159.5H927.5" stroke="#000" stroke-width="1"/><text x="921" y="185.03" text-anchor="end">80</text><path d="M923.5 181.5H927.5" stroke="#000" stroke-width="1"/><text x="921" y="207.13500000000002" text-anchor="end">90</text><path d="M923.5 203.5H927.5" stroke="#000" stroke-width="1"/><text x="921" y="229.24" text-anchor="end">100</text><path d="M923.5 225.5H927.5" stroke="#000" stroke-width="1"/><text x="921" y="251.34500000000003" text-anchor="end">110</text><path d="M923.5 247.5H927.5" stroke="#000" stroke-width="1"/><text x="921" y="273.45" text-anchor="end">120</text><path d="M923.5 269.5H927.5" stroke="#000" stroke-width="1"/><path d="M923.5 291.5H927.5" stroke="#000" stroke-width="1"/><text x="921" y="303.397" text-anchor="end">134</text><path d="M923.5 299.5H927.5" stroke="#000" stroke-width="1"/><text x="929.0" y="319.5" text-anchor="middle">5</text><path d="M929.5 303V308" stroke="#000" stroke-width="1"/><text x="960.1" y="319.5" text-anchor="middle">20</text><path d="M960.5 303V308" stroke="#000" stroke-width="1"/><text x="1001.6" y="319.5" text-anchor="middle">40</text><path d="M1002.5 303V308" stroke="#000" stroke-width="1"/><text x="1043.1" y="319.5" text-anchor="middle">60</text><path d="M1043.5 303V308" stroke="#000" stroke-width="1"/><text x="1084.6" y="319.5" text-anchor="middle">80</text><path d="M1085.5 303V308" stroke="#000" stroke-width="1"/><text x="1126.0" y="319.5" text-anchor="middle">100</text><path d="M1126.5 303V308" stroke="#000" stroke-width="1"/><text x="1167.5" y="319.5" text-anchor="middle">120</text><path d="M1168.5 303V308" stroke="#000" stroke-width="1"/><text x="1209.0" y="319.5" text-anchor="middle">140</text><path d="M1208.5 303V308" stroke="#000" stroke-width="1"/><rect x="1235.5" y="38.5" width="20.5" height="150" fill="#000"/><rect x="1237" y="40" width="17.5" height="3" fill="#fff"/><rect x="1237" y="45" width="17.5" height="142.5" fill="url(#cbar)"/><path d="M1258.5 46.5H1262.5" stroke="#000" stroke-width="1"/><text x="1264.8" y="50.199999999999996" text-anchor="start">650</text><path d="M1258.5 108.5H1262.5" stroke="#000" stroke-width="1"/><text x="1264.8" y="112.80000000000001" text-anchor="start">380</text><path d="M1258.5 160.5H1262.5" stroke="#000" stroke-width="1"/><text x="1264.8" y="164.70000000000002" text-anchor="start">160</text><path d="M1258.5 184.5H1262.5" stroke="#000" stroke-width="1"/><text x="1264.8" y="188.4" text-anchor="start">64</text><text x="1313.8" y="72.5" text-anchor="middle" textLength="44.5" lengthAdjust="spacingAndGlyphs">intensity</text><text x="1317.8" y="122.5" text-anchor="middle" textLength="31" lengthAdjust="spacingAndGlyphs">radius</text><text x="1252.6" y="224.5" text-anchor="start" textLength="32.5" lengthAdjust="spacingAndGlyphs">center</text><text x="1244.9" y="281.5" text-anchor="start" textLength="44.5" lengthAdjust="spacingAndGlyphs">last mod</text><rect x="926" y="340" width="390" height="115" fill="#000"/><g shape-rendering="crispEdges" stroke-width="1"><path d="M932.5 340V455M938.5 340V455M944.5 340V455M950.5 340V455M956.5 340V455M961.5 340V455M967.5 340V455M973.5 340V455M979.5 340V455M985.5 340V455M991.5 340V455M997.5 340V455M1003.5 340V455M1008.5 340V455M1014.5 340V455M1020.5 340V455M1026.5 340V455M1032.5 340V455M1038.5 340V455M1044.5 340V455M1050.5 340V455M1055.5 340V455M1061.5 340V455M1067.5 340V455M1073.5 340V455M1079.5 340V455M1085.5 340V455M1091.5 340V455M1097.5 340V455M1103.5 340V455M1108.5 340V455M1114.5 340V455M1120.5 340V455M1126.5 340V455M1132.5 340V455M1138.5 340V455M1144.5 340V455M1150.5 340V455M1155.5 340V455M1161.5 340V455M1167.5 340V455M1173.5 340V455M1179.5 340V455M1185.5 340V455M1191.5 340V455M1197.5 340V455M1202.5 340V455M1208.5 340V455M1214.5 340V455M1220.5 340V455M1226.5 340V455M1232.5 340V455M1238.5 340V455M1244.5 340V455M1249.5 340V455M1255.5 340V455M1261.5 340V455M1267.5 340V455M1273.5 340V455M1279.5 340V455M1285.5 340V455M1291.5 340V455M1296.5 340V455M1302.5 340V455M1308.5 340V455M1314.5 340V455M932 454.5H1316M932 450.5H1316M932 445.5H1316M932 441.5H1316M932 436.5H1316M932 431.5H1316M932 427.5H1316M932 422.5H1316M932 418.5H1316M932 413.5H1316M932 408.5H1316M932 404.5H1316M932 399.5H1316M932 394.5H1316M932 390.5H1316M932 385.5H1316M932 381.5H1316M932 376.5H1316M932 371.5H1316M932 367.5H1316M932 362.5H1316M932 357.5H1316M932 353.5H1316M932 348.5H1316M932 344.5H1316" stroke="#003c00" fill="none"/><path d="M932.5 340V455M961.5 340V455M991.5 340V455M1020.5 340V455M1050.5 340V455M1079.5 340V455M1108.5 340V455M1138.5 340V455M1167.5 340V455M1197.5 340V455M1226.5 340V455M1255.5 340V455M1285.5 340V455M1314.5 340V455M932 454.5H1316M932 431.5H1316M932 408.5H1316M932 385.5H1316M932 362.5H1316" stroke="#006800" fill="none"/></g><polyline points="932.4,361.8 1069.1,361.8 1079,363.1 1084,364.8 1091.4,369.8 1096.4,378.5 1101.4,390.9 1106.3,405.8 1111.3,420.7 1116.3,431.9 1120.7,437.6 1314.5,437.6" fill="none" stroke="#f04040" stroke-width="2.2" stroke-linejoin="round" /><path d="M932 364.5h3M933.5 363v3M935 365.5h3M936.5 364v3M937 365.5h3M938.5 364v3M940 365.5h3M941.5 364v3M943 366.5h3M944.5 365v3M946 365.5h3M947.5 364v3M949 368.5h3M950.5 367v3M952 368.5h3M953.5 367v3M955 366.5h3M956.5 365v3M958 367.5h3M959.5 366v3M961 365.5h3M962.5 364v3M964 365.5h3M965.5 364v3M967 363.5h3M968.5 362v3M970 363.5h3M971.5 362v3M973 361.5h3M974.5 360v3M976 362.5h3M977.5 361v3M979 363.5h3M980.5 362v3M982 362.5h3M983.5 361v3M984 362.5h3M985.5 361v3M987 364.5h3M988.5 363v3M990 360.5h3M991.5 359v3M993 360.5h3M994.5 359v3M996 360.5h3M997.5 359v3M999 359.5h3M1000.5 358v3M1002 360.5h3M1003.5 359v3M1005 359.5h3M1006.5 358v3M1008 359.5h3M1009.5 358v3M1011 359.5h3M1012.5 358v3M1014 358.5h3M1015.5 357v3M1017 358.5h3M1018.5 357v3M1020 358.5h3M1021.5 357v3M1023 358.5h3M1024.5 357v3M1026 359.5h3M1027.5 358v3M1029 358.5h3M1030.5 357v3M1031 358.5h3M1032.5 357v3M1034 357.5h3M1035.5 356v3M1037 358.5h3M1038.5 357v3M1040 358.5h3M1041.5 357v3M1043 358.5h3M1044.5 357v3M1046 359.5h3M1047.5 358v3M1049 359.5h3M1050.5 358v3M1052 359.5h3M1053.5 358v3M1055 359.5h3M1056.5 358v3M1058 359.5h3M1059.5 358v3M1061 359.5h3M1062.5 358v3M1064 360.5h3M1065.5 359v3M1067 359.5h3M1068.5 358v3M1070 361.5h3M1071.5 360v3M1073 362.5h3M1074.5 361v3M1076 361.5h3M1077.5 360v3M1079 361.5h3M1080.5 360v3M1081 364.5h3M1082.5 363v3M1084 365.5h3M1085.5 364v3M1087 366.5h3M1088.5 365v3M1090 367.5h3M1091.5 366v3M1093 374.5h3M1094.5 373v3M1096 379.5h3M1097.5 378v3M1099 387.5h3M1100.5 386v3M1102 395.5h3M1103.5 394v3M1105 404.5h3M1106.5 403v3M1108 412.5h3M1109.5 411v3M1111 420.5h3M1112.5 419v3M1114 427.5h3M1115.5 426v3M1117 432.5h3M1118.5 431v3M1120 435.5h3M1121.5 434v3M1123 432.5h3M1124.5 431v3M1126 428.5h3M1127.5 427v3M1128 430.5h3M1129.5 429v3M1131 435.5h3M1132.5 434v3M1134 438.5h3M1135.5 437v3M1137 438.5h3M1138.5 437v3M1140 437.5h3M1141.5 436v3M1143 438.5h3M1144.5 437v3M1146 438.5h3M1147.5 437v3M1149 437.5h3M1150.5 436v3M1152 438.5h3M1153.5 437v3M1155 438.5h3M1156.5 437v3M1158 438.5h3M1159.5 437v3M1161 438.5h3M1162.5 437v3M1164 438.5h3M1165.5 437v3M1167 437.5h3M1168.5 436v3M1170 437.5h3M1171.5 436v3M1173 437.5h3M1174.5 436v3M1175 438.5h3M1176.5 437v3M1178 437.5h3M1179.5 436v3M1181 437.5h3M1182.5 436v3M1184 438.5h3M1185.5 437v3M1187 438.5h3M1188.5 437v3M1190 438.5h3M1191.5 437v3M1193 437.5h3M1194.5 436v3M1196 437.5h3M1197.5 436v3M1199 438.5h3M1200.5 437v3M1202 438.5h3M1203.5 437v3M1205 438.5h3M1206.5 437v3M1208 437.5h3M1209.5 436v3M1211 438.5h3M1212.5 437v3M1214 438.5h3M1215.5 437v3M1217 438.5h3M1218.5 437v3M1220 437.5h3M1221.5 436v3M1222 438.5h3M1223.5 437v3M1225 438.5h3M1226.5 437v3M1228 438.5h3M1229.5 437v3M1231 437.5h3M1232.5 436v3M1234 438.5h3M1235.5 437v3M1237 438.5h3M1238.5 437v3M1240 438.5h3M1241.5 437v3M1243 437.5h3M1244.5 436v3M1246 438.5h3M1247.5 437v3M1249 438.5h3M1250.5 437v3M1252 438.5h3M1253.5 437v3M1255 438.5h3M1256.5 437v3M1258 438.5h3M1259.5 437v3M1261 437.5h3M1262.5 436v3M1264 438.5h3M1265.5 437v3M1267 438.5h3M1268.5 437v3M1269 438.5h3M1270.5 437v3M1272 438.5h3M1273.5 437v3M1275 438.5h3M1276.5 437v3M1278 438.5h3M1279.5 437v3M1281 438.5h3M1282.5 437v3M1284 438.5h3M1285.5 437v3M1287 438.5h3M1288.5 437v3M1290 438.5h3M1291.5 437v3M1293 438.5h3M1294.5 437v3M1296 438.5h3M1297.5 437v3M1299 437.5h3M1300.5 436v3M1302 437.5h3M1303.5 436v3M1305 438.5h3M1306.5 437v3M1308 437.5h3M1309.5 436v3M1311 438.5h3M1312.5 437v3M1314 437.5h3M1315.5 436v3" stroke="#fff" stroke-width="1" shape-rendering="crispEdges" fill="none"/><text x="923.7" y="459.2" text-anchor="end">0</text><text x="923.7" y="436.09999999999997" text-anchor="end">100</text><text x="923.7" y="413.0" text-anchor="end">200</text><text x="923.7" y="389.9" text-anchor="end">300</text><text x="923.7" y="366.8" text-anchor="end">400</text><text x="923.7" y="343.7" text-anchor="end">500</text><text x="932.6" y="473.3" text-anchor="middle">0</text><path d="M933.5 456V461" stroke="#000" stroke-width="1"/><text x="962.0" y="473.3" text-anchor="middle">10</text><path d="M962.5 456V461" stroke="#000" stroke-width="1"/><text x="991.4" y="473.3" text-anchor="middle">20</text><path d="M991.5 456V461" stroke="#000" stroke-width="1"/><text x="1020.7" y="473.3" text-anchor="middle">30</text><path d="M1021.5 456V461" stroke="#000" stroke-width="1"/><text x="1050.1" y="473.3" text-anchor="middle">40</text><path d="M1050.5 456V461" stroke="#000" stroke-width="1"/><text x="1079.5" y="473.3" text-anchor="middle">50</text><path d="M1080.5 456V461" stroke="#000" stroke-width="1"/><text x="1108.9" y="473.3" text-anchor="middle">60</text><path d="M1109.5 456V461" stroke="#000" stroke-width="1"/><text x="1138.3" y="473.3" text-anchor="middle">70</text><path d="M1138.5 456V461" stroke="#000" stroke-width="1"/><text x="1167.6" y="473.3" text-anchor="middle">80</text><path d="M1168.5 456V461" stroke="#000" stroke-width="1"/><text x="1197.0" y="473.3" text-anchor="middle">90</text><path d="M1197.5 456V461" stroke="#000" stroke-width="1"/><text x="1226.4" y="473.3" text-anchor="middle">100</text><path d="M1226.5 456V461" stroke="#000" stroke-width="1"/><text x="1255.8" y="473.3" text-anchor="middle">110</text><path d="M1256.5 456V461" stroke="#000" stroke-width="1"/><text x="1285.2" y="473.3" text-anchor="middle">120</text><path d="M1285.5 456V461" stroke="#000" stroke-width="1"/><text x="1314.5" y="473.3" text-anchor="middle">130</text><path d="M1315.5 456V461" stroke="#000" stroke-width="1"/><text x="1108.5" y="490.8" text-anchor="middle" textLength="62" lengthAdjust="spacingAndGlyphs">Radius (pix)</text><text x="898.5" y="398" text-anchor="middle" textLength="55" lengthAdjust="spacingAndGlyphs" transform="rotate(-90 898.5 398)">Amplitude</text></svg><div class="legend" style="left:1176px;top:336px;width:163px;height:22px;"></div><svg width="2115" height="503" viewBox="0 0 2115 503"><rect x="1226.5" y="338.5" width="27.5" height="16.5" fill="#000"/><path d="M1227.0 350.5h3M1228.5 349.0v3" stroke="#fff" stroke-width="1" shape-rendering="crispEdges"/><path d="M1237.0 341.5h3M1238.5 340.0v3" stroke="#fff" stroke-width="1" shape-rendering="crispEdges"/><path d="M1247.0 350.5h3M1248.5 349.0v3" stroke="#fff" stroke-width="1" shape-rendering="crispEdges"/><rect x="1296.5" y="338.5" width="27.5" height="16.5" fill="#000"/><polyline points="1298.5,350.5 1310.25,341.0 1322.5,350.0" fill="none" stroke="#f04848" stroke-width="2" stroke-linecap="round"/><text x="1191.5" y="351" text-anchor="start" textLength="23.5" lengthAdjust="spacingAndGlyphs">Data</text><text x="1261" y="351" text-anchor="start" textLength="12.5" lengthAdjust="spacingAndGlyphs">Fit</text></svg><div class="ind" style="left:1301px;top:78.5px;width:38px;height:23.5px;"><span class="lbl" style="left:3px;top:3px">84</span></div><div class="ind" style="left:1301px;top:127.5px;width:38px;height:23.5px;"><span class="lbl" style="left:3px;top:3px">120</span></div><div class="abs" style="left:1251px;top:231px;width:88px;height:31.5px;border:3.5px solid;border-color:#989898 #a6a6a6 #aaaaaa #989898;background:#b3b3b3"></div><div class="ind" style="left:1258px;top:236px;width:37px;height:21px;"><span class="lbl" style="left:0.5px;top:2px">143.6</span></div><div class="ind" style="left:1297px;top:236px;width:37px;height:21px;"><span class="lbl" style="left:0.5px;top:2px">147.9</span></div><div class="ind" style="left:1243px;top:286.5px;width:95.5px;height:38.0px;"><span class="lbl" style="left:3px;top:2.5px;line-height:14.7px">12:43:19.000<br>25/06/2024</span></div><div class="abs" style="left:1353px;top:0px;width:762px;height:335px;background:linear-gradient(to bottom,#cfcfcf 0,#c8c8c8 3px,rgba(200,200,200,0) 4px) top/100% 4px no-repeat,linear-gradient(to top,#8c8c8c 0,#9a9a9a 3px,rgba(154,154,154,0) 4px) bottom/100% 4px no-repeat,linear-gradient(to right,#cacaca 0,#c6c6c6 3px,#b3b3b3 4px,#b3b3b3 calc(100% - 5px),#9c9c9c calc(100% - 4px),#8e8e8e 100%)"></div><div class="abs" style="left:1365px;top:52px;width:166px;height:94px;border:1px solid #000;background:#b3b3b3;box-shadow:inset 2px 2px 0 #e2e2e2, inset -2px -2px 0 #6e6e6e"></div><div class="thin" style="left:1370px;top:74px;width:91px;height:32px;background:#b3b3b3"><span class="lbl" style="left:10px;top:0.5px;line-height:15px">12:43:19<br>25/06/2024</span></div><div class="thin" style="left:1370px;top:122px;width:91px;height:18px;background:#b3b3b3"><span class="lbl" style="left:9px;top:3px">0.000000</span></div><div class="lbl" style="left:1371.5px;top:60px;font-weight:bold;font-size:12px">t0</div><div class="lbl" style="left:1371.5px;top:108px;font-weight:bold;font-size:12px">dt</div><div class="lbl" style="left:1465px;top:61.5px;font-weight:bold;font-size:12px">Y</div><div class="thin" style="left:1476px;top:58px;width:49px;height:20px;background:#b3b3b3"><span class="lbl" style="left:13px;top:4px">0</span></div><svg width="2115" height="503" viewBox="0 0 2115 503"><rect x="1478.5" y="60.5" width="7" height="15" fill="#d0d0d0" stroke="#707070" stroke-width="1"/><path d="M1478.5 68h7" stroke="#707070"/><path d="M1479.7 66l2.3-4 2.3 4zM1479.7 70.5l2.3 4 2.3-4z" fill="#000"/></svg><div class="thin" style="left:1464px;top:79px;width:62px;height:62px;background:#b3b3b3;border-color:#dcdcdc #6e6e6e #6e6e6e #dcdcdc"></div><div class="thin" style="left:1467px;top:82px;width:56px;height:18px;background:#b3b3b3"><span class="lbl" style="left:1.5px;top:3px">0.001332</span></div><div class="thin" style="left:1467px;top:101px;width:56px;height:18px;background:#b3b3b3"><span class="lbl" style="left:1.5px;top:3px">0.001951</span></div><div class="thin" style="left:1467px;top:120px;width:56px;height:18px;background:#b3b3b3"><span class="lbl" style="left:1.5px;top:3px">0.001929</span></div><div class="lbl" style="left:1366.5px;top:38px;font-size:11.6px">StoredWfm</div><div class="ind" style="left:1384px;top:206px;width:54px;height:22px;"><span class="lbl" style="left:2.5px;top:2.5px">2.99</span></div><div class="abs" style="left:1480px;top:205px;width:52px;height:21px;border:2px solid;border-color:#8e8e8e #dedede #dedede #8e8e8e;background:#fff"><span class="lbl" style="left:3.5px;top:3.5px">13.8k</span></div><div class="ind" style="left:1425px;top:270px;width:71px;height:30px;"><span class="lbl" style="left:4px;top:3.5px;font-size:15px">1300</span></div><svg width="2115" height="503" viewBox="0 0 2115 503"><defs><linearGradient id="spn" x1="0" x2="1"><stop offset="0" stop-color="#e6e6e6"/><stop offset="0.5" stop-color="#c4c4c4"/><stop offset="1" stop-color="#8c8c8c"/></linearGradient></defs><rect x="1467.5" y="202.5" width="11.5" height="25" rx="5" fill="url(#spn)" stroke="#8a8a8a" stroke-width="0.8"/><path d="M1467.5 215h11.5" stroke="#8a8a8a" stroke-width="0.8"/><path d="M1470.3 211l3-5 3 5zM1470.3 219l3 5 3-5z" fill="none" stroke="#555" stroke-width="0.8"/><text x="1371.4" y="199.5" text-anchor="start" textLength="86.8" lengthAdjust="spacingAndGlyphs">Space charge (V)</text><text x="1480.2" y="199.5" text-anchor="start" textLength="57.4" lengthAdjust="spacingAndGlyphs">dV/dt (V/s)</text><text x="1402.5" y="263" text-anchor="start" textLength="110.8" lengthAdjust="spacingAndGlyphs" font-size="15.5">Temperature (K)</text></svg><div class="frame" style="left:1558px;top:36px;width:503px;height:283px;background:linear-gradient(to bottom,#dadada 0,#d2d2d2 2px,rgba(210,210,210,0) 3px) top/100% 3px no-repeat,linear-gradient(to top,#8e8e8e 0,#a8a8a8 2px,rgba(168,168,168,0) 3px) bottom/100% 3px no-repeat,linear-gradient(to right,#bdbdbd 0,#d5d5d5 1px,#d3d3d3 8px,#bfbfbf 13px,#bfbfbf calc(100% - 14px),#a4a4a4 calc(100% - 6px),#6c6c6c 100%)"></div><div class="legend" style="left:1905px;top:11px;width:169px;height:22px;"></div><svg width="2115" height="503" viewBox="0 0 2115 503"><text x="1566.2" y="30" text-anchor="start" textLength="49" lengthAdjust="spacingAndGlyphs">AnalWfm</text><rect x="1958.5" y="13.5" width="27.5" height="17" fill="#000"/><rect x="1960" y="25.5" width="2" height="2" fill="#fff"/><rect x="1969" y="15" width="2" height="2" fill="#fff"/><rect x="1979" y="25.5" width="2" height="2" fill="#fff"/><rect x="2031.5" y="13.5" width="27.5" height="17" fill="#000"/><polyline points="2033.5,26.0 2045.25,16.0 2057.5,25.5" fill="none" stroke="#f04848" stroke-width="2" stroke-linecap="round"/><text x="1920.6" y="26" text-anchor="start" textLength="26" lengthAdjust="spacingAndGlyphs">SiPM</text><text x="1993.4" y="26" text-anchor="start" textLength="12.5" lengthAdjust="spacingAndGlyphs">Fit</text><rect x="1645" y="45" width="392" height="233" fill="#000"/><g shape-rendering="crispEdges" stroke-width="1"><path d="M1652.5 45V278M1660.5 45V278M1668.5 45V278M1676.5 45V278M1684.5 45V278M1691.5 45V278M1699.5 45V278M1707.5 45V278M1715.5 45V278M1723.5 45V278M1731.5 45V278M1738.5 45V278M1746.5 45V278M1754.5 45V278M1762.5 45V278M1770.5 45V278M1778.5 45V278M1785.5 45V278M1793.5 45V278M1801.5 45V278M1809.5 45V278M1817.5 45V278M1825.5 45V278M1832.5 45V278M1840.5 45V278M1848.5 45V278M1856.5 45V278M1864.5 45V278M1872.5 45V278M1879.5 45V278M1887.5 45V278M1895.5 45V278M1903.5 45V278M1911.5 45V278M1919.5 45V278M1926.5 45V278M1934.5 45V278M1942.5 45V278M1950.5 45V278M1958.5 45V278M1966.5 45V278M1973.5 45V278M1981.5 45V278M1989.5 45V278M1997.5 45V278M2005.5 45V278M2013.5 45V278M2020.5 45V278M2028.5 45V278M2036.5 45V278M1645 82.5H2037M1645 68.5H2037M1645 60.5H2037M1645 54.5H2037M1645 127.5H2037M1645 114.5H2037M1645 105.5H2037M1645 100.5H2037M1645 173.5H2037M1645 159.5H2037M1645 151.5H2037M1645 145.5H2037M1645 218.5H2037M1645 205.5H2037M1645 196.5H2037M1645 191.5H2037M1645 264.5H2037M1645 250.5H2037M1645 242.5H2037M1645 236.5H2037" stroke="#003c00" fill="none"/><path d="M1723.5 45V278M1801.5 45V278M1879.5 45V278M1958.5 45V278M2036.5 45V278M1645 50.5H2037M1645 95.5H2037M1645 141.5H2037M1645 186.5H2037M1645 232.5H2037M1645 277.5H2037" stroke="#006800" fill="none"/></g><g clip-path="url(#c4)"><clipPath id="c4"><rect x="1645" y="45" width="392" height="233"/></clipPath><path d="M1647 219h2v2h-2zM1646 227h2v2h-2zM1647 215h2v2h-2zM1648 225h2v2h-2zM1648 211h2v2h-2zM1647 224h2v2h-2zM1649 207h2v2h-2zM1649 213h2v2h-2zM1650 209h2v2h-2zM1651 216h2v2h-2zM1652 221h2v2h-2zM1651 211h2v2h-2zM1650 223h2v2h-2zM1651 205h2v2h-2zM1652 201h2v2h-2zM1651 209h2v2h-2zM1653 195h2v2h-2zM1653 200h2v2h-2zM1654 202h2v2h-2zM1653 207h2v2h-2zM1655 208h2v2h-2zM1654 215h2v2h-2zM1655 210h2v2h-2zM1656 216h2v2h-2zM1655 218h2v2h-2zM1656 223h2v2h-2zM1657 211h2v2h-2zM1657 205h2v2h-2zM1658 201h2v2h-2zM1659 210h2v2h-2zM1659 205h2v2h-2zM1659 212h2v2h-2zM1660 213h2v2h-2zM1659 224h2v2h-2zM1661 215h2v2h-2zM1661 224h2v2h-2zM1661 212h2v2h-2zM1660 222h2v2h-2zM1661 208h2v2h-2zM1660 220h2v2h-2zM1662 203h2v2h-2zM1662 210h2v2h-2zM1663 199h2v2h-2zM1663 205h2v2h-2zM1664 202h2v2h-2zM1664 215h2v2h-2zM1665 210h2v2h-2zM1665 212h2v2h-2zM1666 222h2v2h-2zM1665 216h2v2h-2zM1665 222h2v2h-2zM1666 213h2v2h-2zM1665 218h2v2h-2zM1667 209h2v2h-2zM1668 199h2v2h-2zM1667 206h2v2h-2zM1668 206h2v2h-2zM1669 212h2v2h-2zM1670 213h2v2h-2zM1671 215h2v2h-2zM1671 219h2v2h-2zM1683 223h2v2h-2zM1681 236h2v2h-2zM1683 217h2v2h-2zM1682 229h2v2h-2zM1685 210h2v2h-2zM1685 204h2v2h-2zM1685 217h2v2h-2zM1685 210h2v2h-2zM1687 216h2v2h-2zM1687 228h2v2h-2zM1688 222h2v2h-2zM1688 230h2v2h-2zM1695 220h2v2h-2zM1695 224h2v2h-2zM1696 216h2v2h-2zM1695 229h2v2h-2zM1696 210h2v2h-2zM1695 218h2v2h-2zM1697 204h2v2h-2zM1696 215h2v2h-2zM1698 210h2v2h-2zM1698 219h2v2h-2zM1699 217h2v2h-2zM1700 222h2v2h-2zM1700 220h2v2h-2zM1702 213h2v2h-2zM1701 223h2v2h-2zM1702 207h2v2h-2zM1703 201h2v2h-2zM1702 205h2v2h-2zM1704 196h2v2h-2zM1705 202h2v2h-2zM1705 210h2v2h-2zM1705 206h2v2h-2zM1707 217h2v2h-2zM1707 210h2v2h-2zM1708 206h2v2h-2zM1708 212h2v2h-2zM1709 201h2v2h-2zM1710 196h2v2h-2zM1711 191h2v2h-2zM1710 196h2v2h-2zM1712 197h2v2h-2zM1711 207h2v2h-2zM1713 202h2v2h-2zM1714 215h2v2h-2zM1714 207h2v2h-2zM1715 214h2v2h-2zM1711 203h2v2h-2zM1712 209h2v2h-2zM1712 196h2v2h-2zM1713 207h2v2h-2zM1714 196h2v2h-2zM1713 201h2v2h-2zM1714 187h2v2h-2zM1714 193h2v2h-2zM1715 193h2v2h-2zM1714 202h2v2h-2zM1716 197h2v2h-2zM1717 210h2v2h-2zM1717 205h2v2h-2zM1717 214h2v2h-2zM1715 220h2v2h-2zM1715 232h2v2h-2zM1716 218h2v2h-2zM1716 227h2v2h-2zM1717 210h2v2h-2zM1717 218h2v2h-2zM1718 208h2v2h-2zM1719 213h2v2h-2zM1720 217h2v2h-2zM1720 216h2v2h-2zM1720 230h2v2h-2zM1721 220h2v2h-2zM1721 233h2v2h-2zM1739 217h2v2h-2zM1739 222h2v2h-2zM1740 215h2v2h-2zM1740 225h2v2h-2zM1741 210h2v2h-2zM1740 223h2v2h-2zM1742 205h2v2h-2zM1742 208h2v2h-2zM1743 217h2v2h-2zM1744 215h2v2h-2zM1743 224h2v2h-2zM1744 220h2v2h-2zM1744 228h2v2h-2zM1746 218h2v2h-2zM1747 213h2v2h-2zM1748 208h2v2h-2zM1749 201h2v2h-2zM1750 207h2v2h-2zM1751 211h2v2h-2zM1751 210h2v2h-2zM1751 216h2v2h-2zM1752 215h2v2h-2zM1753 226h2v2h-2zM1753 223h2v2h-2zM1754 218h2v2h-2zM1755 211h2v2h-2zM1756 216h2v2h-2zM1756 206h2v2h-2zM1756 213h2v2h-2zM1756 222h2v2h-2zM1757 218h2v2h-2zM1758 222h2v2h-2zM1759 235h2v2h-2zM1759 214h2v2h-2zM1758 226h2v2h-2zM1760 207h2v2h-2zM1760 215h2v2h-2zM1761 202h2v2h-2zM1761 214h2v2h-2zM1762 201h2v2h-2zM1761 210h2v2h-2zM1763 205h2v2h-2zM1762 218h2v2h-2zM1764 209h2v2h-2zM1763 222h2v2h-2zM1765 213h2v2h-2zM1764 220h2v2h-2zM1765 218h2v2h-2zM1763 224h2v2h-2zM1765 214h2v2h-2zM1765 221h2v2h-2zM1766 207h2v2h-2zM1765 216h2v2h-2zM1767 207h2v2h-2zM1767 214h2v2h-2zM1768 208h2v2h-2zM1768 218h2v2h-2zM1769 217h2v2h-2zM1769 228h2v2h-2zM1770 221h2v2h-2zM1770 229h2v2h-2zM1771 205h2v2h-2zM1771 204h2v2h-2zM1772 215h2v2h-2zM1772 197h2v2h-2zM1772 205h2v2h-2zM1773 189h2v2h-2zM1774 198h2v2h-2zM1774 196h2v2h-2zM1774 201h2v2h-2zM1775 199h2v2h-2zM1775 209h2v2h-2zM1775 206h2v2h-2zM1776 213h2v2h-2zM1790 201h2v2h-2zM1792 194h2v2h-2zM1790 199h2v2h-2zM1793 190h2v2h-2zM1793 198h2v2h-2zM1793 186h2v2h-2zM1794 193h2v2h-2zM1793 188h2v2h-2zM1794 199h2v2h-2zM1795 193h2v2h-2zM1795 206h2v2h-2zM1795 200h2v2h-2zM1794 208h2v2h-2zM1795 221h2v2h-2zM1795 200h2v2h-2zM1795 212h2v2h-2zM1797 196h2v2h-2zM1796 208h2v2h-2zM1797 191h2v2h-2zM1797 196h2v2h-2zM1797 195h2v2h-2zM1798 204h2v2h-2zM1799 201h2v2h-2zM1798 214h2v2h-2zM1800 206h2v2h-2zM1800 217h2v2h-2zM1803 204h2v2h-2zM1802 215h2v2h-2zM1805 197h2v2h-2zM1804 207h2v2h-2zM1805 195h2v2h-2zM1805 206h2v2h-2zM1806 188h2v2h-2zM1807 196h2v2h-2zM1808 202h2v2h-2zM1808 215h2v2h-2zM1808 203h2v2h-2zM1809 214h2v2h-2zM1809 206h2v2h-2zM1809 211h2v2h-2zM1809 199h2v2h-2zM1809 209h2v2h-2zM1811 195h2v2h-2zM1809 201h2v2h-2zM1811 193h2v2h-2zM1810 204h2v2h-2zM1812 195h2v2h-2zM1812 203h2v2h-2zM1813 203h2v2h-2zM1814 208h2v2h-2zM1813 208h2v2h-2zM1814 220h2v2h-2zM1656 273h2v2h-2zM1751 206h2v2h-2zM1687 208h2v2h-2zM1696 238h2v2h-2zM1726 236h2v2h-2zM1784 214h2v2h-2zM1673 249h2v2h-2zM1655 231h2v2h-2zM1777 205h2v2h-2zM1761 232h2v2h-2zM1799 210h2v2h-2zM1724 258h2v2h-2zM1766 234h2v2h-2zM1680 232h2v2h-2zM1685 203h2v2h-2zM1657 275h2v2h-2zM1718 233h2v2h-2zM1738 238h2v2h-2zM1705 271h2v2h-2zM1658 228h2v2h-2zM1679 220h2v2h-2zM1648 253h2v2h-2zM1702 225h2v2h-2zM1713 210h2v2h-2zM1774 272h2v2h-2zM1647 238h2v2h-2zM1769 238h2v2h-2zM1788 228h2v2h-2zM1740 211h2v2h-2zM1809 269h2v2h-2zM1704 268h2v2h-2zM1792 202h2v2h-2zM1749 258h2v2h-2zM1758 219h2v2h-2zM1790 216h2v2h-2zM1657 230h2v2h-2zM1783 204h2v2h-2zM1676 236h2v2h-2zM1700 222h2v2h-2zM1672 244h2v2h-2zM1734 202h2v2h-2zM1763 267h2v2h-2zM1671 227h2v2h-2zM1751 238h2v2h-2zM1680 234h2v2h-2zM1738 206h2v2h-2zM1661 221h2v2h-2zM1807 273h2v2h-2zM1720 218h2v2h-2zM1718 237h2v2h-2zM1668 269h2v2h-2zM1709 208h2v2h-2zM1710 222h2v2h-2zM1664 223h2v2h-2zM1716 222h2v2h-2zM1669 230h2v2h-2zM1713 217h2v2h-2zM1775 209h2v2h-2zM1663 208h2v2h-2zM1784 270h2v2h-2zM1762 219h2v2h-2zM1792 210h2v2h-2zM1677 213h2v2h-2zM1689 214h2v2h-2zM1760 206h2v2h-2zM1790 228h2v2h-2zM1756 236h2v2h-2zM1707 273h2v2h-2zM1758 229h2v2h-2zM1784 206h2v2h-2zM1765 249h2v2h-2zM1721 248h2v2h-2zM1667 222h2v2h-2zM1676 214h2v2h-2zM1683 267h2v2h-2zM1787 210h2v2h-2zM1724 212h2v2h-2zM1757 214h2v2h-2zM1792 203h2v2h-2zM1695 242h2v2h-2zM1767 215h2v2h-2zM1672 231h2v2h-2zM1701 259h2v2h-2zM1662 247h2v2h-2zM1713 206h2v2h-2zM1813 213h2v2h-2zM1649 231h2v2h-2zM1727 234h2v2h-2zM1680 221h2v2h-2zM1743 215h2v2h-2zM1704 216h2v2h-2zM1705 221h2v2h-2zM1778 215h2v2h-2zM1771 209h2v2h-2zM1652 222h2v2h-2zM1716 263h2v2h-2zM1674 242h2v2h-2zM1793 221h2v2h-2zM1666 213h2v2h-2zM1687 224h2v2h-2zM1694 272h2v2h-2zM1792 222h2v2h-2zM1728 231h2v2h-2zM1661 221h2v2h-2zM1712 222h2v2h-2zM1758 265h2v2h-2zM1765 207h2v2h-2zM1653 217h2v2h-2zM1660 215h2v2h-2zM1804 219h2v2h-2zM1671 222h2v2h-2zM1680 236h2v2h-2zM1814 212h2v2h-2zM1799 235h2v2h-2zM1654 210h2v2h-2zM1744 212h2v2h-2zM1669 272h2v2h-2zM1724 217h2v2h-2zM1785 241h2v2h-2zM1735 203h2v2h-2zM1772 256h2v2h-2zM1686 261h2v2h-2zM1654 210h2v2h-2zM1785 202h2v2h-2zM1757 211h2v2h-2zM1728 203h2v2h-2zM1715 215h2v2h-2zM1705 233h2v2h-2zM1813 246h2v2h-2zM1782 209h2v2h-2zM1711 204h2v2h-2zM1795 222h2v2h-2zM1700 234h2v2h-2zM1712 205h2v2h-2zM1722 232h2v2h-2zM1811 229h2v2h-2zM1802 229h2v2h-2zM1702 241h2v2h-2zM1752 260h2v2h-2zM1730 228h2v2h-2zM1666 217h2v2h-2zM1768 230h2v2h-2zM1647 235h2v2h-2zM1731 204h2v2h-2zM1751 226h2v2h-2zM1810 220h2v2h-2zM1729 209h2v2h-2zM1673 221h2v2h-2zM1796 220h2v2h-2zM1770 208h2v2h-2zM1814 193h2v2h-2zM1812 200h2v2h-2zM1812 208h2v2h-2zM1812 213h2v2h-2zM1814 220h2v2h-2zM1813 226h2v2h-2zM1812 235h2v2h-2zM1812 239h2v2h-2zM1814 248h2v2h-2zM1813 255h2v2h-2zM1811 264h2v2h-2zM1811 268h2v2h-2zM1817 137h2v2h-2zM1817 139h2v2h-2zM1817 141h2v2h-2zM1817 143h2v2h-2zM1817 145h2v2h-2zM1817 147h2v2h-2zM1817 149h2v2h-2zM1818 150h2v2h-2zM1818 155h2v2h-2zM1819 159h2v2h-2zM1819 159h2v2h-2zM1820 163h2v2h-2zM1820 163h2v2h-2zM1820 166h2v2h-2zM1821 167h2v2h-2zM1821 164h2v2h-2zM1821 164h2v2h-2zM1822 160h2v2h-2zM1822 159h2v2h-2zM1823 155h2v2h-2zM1823 152h2v2h-2zM1820 160h2v2h-2zM1821 161h2v2h-2zM1822 161h2v2h-2zM1823 159h2v2h-2zM1824 157h2v2h-2zM1825 157h2v2h-2zM1826 151h2v2h-2zM1827 149h2v2h-2zM1828 151h2v2h-2zM1829 149h2v2h-2zM1830 144h2v2h-2zM1831 144h2v2h-2zM1832 145h2v2h-2zM1833 143h2v2h-2zM1834 142h2v2h-2zM1835 138h2v2h-2zM1836 137h2v2h-2zM1837 134h2v2h-2zM1838 136h2v2h-2zM1839 133h2v2h-2zM1834 148h2v2h-2zM1836 151h2v2h-2zM1835 154h2v2h-2zM1837 157h2v2h-2zM1835 160h2v2h-2zM1835 163h2v2h-2zM1836 166h2v2h-2zM1837 169h2v2h-2zM1834 172h2v2h-2zM1834 175h2v2h-2zM1836 178h2v2h-2zM1835 181h2v2h-2zM1842 127h2v2h-2zM1842 125h2v2h-2zM1842 129h2v2h-2zM1843 131h2v2h-2zM1843 130h2v2h-2zM1844 126h2v2h-2zM1844 124h2v2h-2zM1844 126h2v2h-2zM1845 124h2v2h-2zM1845 122h2v2h-2zM1845 126h2v2h-2zM1846 128h2v2h-2zM1846 128h2v2h-2zM1846 128h2v2h-2zM1847 125h2v2h-2zM1847 127h2v2h-2zM1848 122h2v2h-2zM1848 121h2v2h-2zM1849 123h2v2h-2zM1849 121h2v2h-2zM1849 124h2v2h-2zM1850 125h2v2h-2zM1850 122h2v2h-2zM1850 125h2v2h-2zM1851 120h2v2h-2zM1851 118h2v2h-2zM1852 116h2v2h-2zM1852 120h2v2h-2zM1852 122h2v2h-2zM1853 123h2v2h-2zM1853 121h2v2h-2zM1854 121h2v2h-2zM1854 118h2v2h-2zM1854 117h2v2h-2zM1855 115h2v2h-2zM1855 130h2v2h-2zM1855 117h2v2h-2zM1855 119h2v2h-2zM1855 130h2v2h-2zM1856 119h2v2h-2zM1856 120h2v2h-2zM1856 123h2v2h-2zM1857 118h2v2h-2zM1857 116h2v2h-2zM1857 115h2v2h-2zM1857 113h2v2h-2zM1858 113h2v2h-2zM1859 114h2v2h-2zM1859 112h2v2h-2zM1859 116h2v2h-2zM1859 118h2v2h-2zM1860 117h2v2h-2zM1860 117h2v2h-2zM1861 114h2v2h-2zM1861 111h2v2h-2zM1861 109h2v2h-2zM1862 111h2v2h-2zM1862 109h2v2h-2zM1862 112h2v2h-2zM1863 114h2v2h-2zM1863 117h2v2h-2zM1863 114h2v2h-2zM1863 116h2v2h-2zM1864 111h2v2h-2zM1865 108h2v2h-2zM1865 108h2v2h-2zM1866 110h2v2h-2zM1866 120h2v2h-2zM1866 112h2v2h-2zM1867 112h2v2h-2zM1867 110h2v2h-2zM1868 112h2v2h-2zM1868 107h2v2h-2zM1868 106h2v2h-2zM1869 108h2v2h-2zM1869 115h2v2h-2zM1870 110h2v2h-2zM1870 114h2v2h-2zM1870 110h2v2h-2zM1871 108h2v2h-2zM1871 106h2v2h-2zM1871 103h2v2h-2zM1872 104h2v2h-2zM1872 105h2v2h-2zM1872 107h2v2h-2zM1873 108h2v2h-2zM1873 109h2v2h-2zM1874 107h2v2h-2zM1874 104h2v2h-2zM1875 101h2v2h-2zM1876 103h2v2h-2zM1876 101h2v2h-2zM1876 105h2v2h-2zM1877 107h2v2h-2zM1877 106h2v2h-2zM1878 102h2v2h-2zM1878 99h2v2h-2zM1879 100h2v2h-2zM1879 102h2v2h-2zM1879 103h2v2h-2zM1880 104h2v2h-2zM1880 102h2v2h-2zM1881 103h2v2h-2zM1881 101h2v2h-2zM1882 99h2v2h-2zM1882 98h2v2h-2zM1882 100h2v2h-2zM1883 100h2v2h-2zM1883 102h2v2h-2zM1884 104h2v2h-2zM1883 108h2v2h-2zM1884 102h2v2h-2zM1884 104h2v2h-2zM1884 100h2v2h-2zM1885 96h2v2h-2zM1885 95h2v2h-2zM1885 96h2v2h-2zM1886 97h2v2h-2zM1887 99h2v2h-2zM1886 98h2v2h-2zM1887 100h2v2h-2zM1888 98h2v2h-2zM1888 95h2v2h-2zM1889 94h2v2h-2zM1889 95h2v2h-2zM1890 97h2v2h-2zM1890 95h2v2h-2zM1890 99h2v2h-2zM1891 101h2v2h-2zM1891 96h2v2h-2zM1892 93h2v2h-2zM1892 92h2v2h-2zM1892 91h2v2h-2zM1893 89h2v2h-2zM1893 93h2v2h-2zM1893 94h2v2h-2zM1893 97h2v2h-2zM1894 97h2v2h-2zM1894 95h2v2h-2zM1895 92h2v2h-2zM1895 89h2v2h-2zM1896 91h2v2h-2zM1896 93h2v2h-2zM1896 95h2v2h-2zM1897 94h2v2h-2zM1898 94h2v2h-2zM1897 91h2v2h-2zM1898 90h2v2h-2zM1899 88h2v2h-2zM1898 90h2v2h-2zM1899 89h2v2h-2zM1900 91h2v2h-2zM1899 88h2v2h-2zM1900 93h2v2h-2zM1901 93h2v2h-2zM1901 94h2v2h-2zM1901 89h2v2h-2zM1902 87h2v2h-2zM1902 84h2v2h-2zM1903 86h2v2h-2zM1902 88h2v2h-2zM1903 89h2v2h-2zM1903 86h2v2h-2zM1904 91h2v2h-2zM1903 93h2v2h-2zM1904 91h2v2h-2zM1905 88h2v2h-2zM1905 86h2v2h-2zM1906 83h2v2h-2zM1906 82h2v2h-2zM1906 86h2v2h-2zM1906 84h2v2h-2zM1907 89h2v2h-2zM1907 90h2v2h-2zM1908 87h2v2h-2zM1908 85h2v2h-2zM1909 84h2v2h-2zM1909 82h2v2h-2zM1909 84h2v2h-2zM1910 84h2v2h-2zM1910 87h2v2h-2zM1911 89h2v2h-2zM1911 86h2v2h-2zM1912 82h2v2h-2zM1912 80h2v2h-2zM1912 82h2v2h-2zM1913 83h2v2h-2zM1914 84h2v2h-2zM1914 87h2v2h-2zM1915 85h2v2h-2zM1914 87h2v2h-2zM1915 83h2v2h-2zM1915 80h2v2h-2zM1916 79h2v2h-2zM1916 95h2v2h-2zM1916 80h2v2h-2zM1917 83h2v2h-2zM1917 85h2v2h-2zM1918 83h2v2h-2zM1918 85h2v2h-2zM1918 86h2v2h-2zM1918 89h2v2h-2zM1918 81h2v2h-2zM1919 79h2v2h-2zM1919 76h2v2h-2zM1920 78h2v2h-2zM1920 81h2v2h-2zM1920 79h2v2h-2zM1921 83h2v2h-2zM1921 83h2v2h-2zM1922 82h2v2h-2zM1922 80h2v2h-2zM1922 78h2v2h-2zM1923 77h2v2h-2zM1923 80h2v2h-2zM1923 92h2v2h-2zM1924 81h2v2h-2zM1924 84h2v2h-2zM1925 82h2v2h-2zM1924 85h2v2h-2zM1925 80h2v2h-2zM1926 76h2v2h-2zM1926 79h2v2h-2zM1926 75h2v2h-2zM1926 77h2v2h-2zM1927 77h2v2h-2zM1927 80h2v2h-2zM1928 82h2v2h-2zM1928 84h2v2h-2zM1928 79h2v2h-2zM1929 76h2v2h-2zM1929 74h2v2h-2zM1930 76h2v2h-2zM1931 79h2v2h-2zM1931 81h2v2h-2zM1932 79h2v2h-2zM1932 76h2v2h-2zM1933 73h2v2h-2zM1933 75h2v2h-2zM1933 75h2v2h-2zM1934 77h2v2h-2zM1934 80h2v2h-2zM1935 77h2v2h-2zM1935 78h2v2h-2zM1936 75h2v2h-2zM1936 73h2v2h-2zM1936 73h2v2h-2zM1937 73h2v2h-2zM1936 71h2v2h-2zM1937 76h2v2h-2zM1938 78h2v2h-2zM1938 80h2v2h-2zM1938 87h2v2h-2zM1938 78h2v2h-2zM1938 76h2v2h-2zM1939 74h2v2h-2zM1939 71h2v2h-2zM1940 70h2v2h-2zM1940 71h2v2h-2zM1940 78h2v2h-2zM1941 75h2v2h-2zM1941 74h2v2h-2zM1942 73h2v2h-2zM1942 71h2v2h-2zM1942 69h2v2h-2zM1943 71h2v2h-2zM1943 81h2v2h-2zM1943 72h2v2h-2zM1944 74h2v2h-2zM1944 76h2v2h-2zM1945 76h2v2h-2zM1945 73h2v2h-2zM1946 75h2v2h-2zM1946 70h2v2h-2zM1947 69h2v2h-2zM1946 70h2v2h-2zM1947 69h2v2h-2zM1947 67h2v2h-2zM1948 71h2v2h-2zM1948 73h2v2h-2zM1949 75h2v2h-2zM1949 73h2v2h-2zM1950 75h2v2h-2zM1950 71h2v2h-2zM1950 73h2v2h-2zM1950 67h2v2h-2zM1951 66h2v2h-2zM1951 67h2v2h-2zM1952 70h2v2h-2zM1952 70h2v2h-2zM1952 68h2v2h-2zM1953 73h2v2h-2zM1953 71h2v2h-2zM1953 74h2v2h-2zM1954 71h2v2h-2zM1954 68h2v2h-2zM1954 70h2v2h-2zM1955 65h2v2h-2zM1955 63h2v2h-2zM1955 64h2v2h-2zM1956 66h2v2h-2zM1956 66h2v2h-2zM1956 70h2v2h-2zM1956 68h2v2h-2zM1957 72h2v2h-2zM1957 74h2v2h-2zM1958 71h2v2h-2zM1958 68h2v2h-2zM1958 66h2v2h-2zM1959 66h2v2h-2zM1959 62h2v2h-2zM1959 64h2v2h-2zM1960 63h2v2h-2zM1960 61h2v2h-2zM1960 66h2v2h-2zM1961 69h2v2h-2zM1961 67h2v2h-2zM1961 71h2v2h-2zM1962 73h2v2h-2zM1962 68h2v2h-2zM1961 66h2v2h-2zM1962 64h2v2h-2zM1963 62h2v2h-2zM1964 60h2v2h-2zM1964 62h2v2h-2zM1965 65h2v2h-2zM1964 67h2v2h-2zM1965 68h2v2h-2zM1966 68h2v2h-2zM1966 65h2v2h-2zM1966 67h2v2h-2zM1967 62h2v2h-2zM1967 58h2v2h-2zM1968 59h2v2h-2zM1968 61h2v2h-2zM1969 61h2v2h-2zM1969 64h2v2h-2zM1970 67h2v2h-2zM1970 65h2v2h-2zM1971 62h2v2h-2zM1971 60h2v2h-2zM1971 58h2v2h-2zM1972 55h2v2h-2zM1972 57h2v2h-2zM1973 59h2v2h-2zM1973 60h2v2h-2zM1973 63h2v2h-2zM1974 65h2v2h-2zM1975 61h2v2h-2zM1975 59h2v2h-2zM1976 55h2v2h-2zM1976 53h2v2h-2zM1976 54h2v2h-2zM1977 57h2v2h-2zM1977 54h2v2h-2zM1977 59h2v2h-2zM1977 57h2v2h-2zM1978 61h2v2h-2zM1978 61h2v2h-2zM1979 58h2v2h-2zM1980 55h2v2h-2zM1980 53h2v2h-2zM1980 52h2v2h-2zM1980 50h2v2h-2zM1981 53h2v2h-2zM1981 55h2v2h-2zM1981 55h2v2h-2zM1982 58h2v2h-2zM1982 61h2v2h-2zM1983 58h2v2h-2zM1983 56h2v2h-2zM1983 56h2v2h-2zM1984 52h2v2h-2zM1984 49h2v2h-2zM1984 51h2v2h-2z" fill="#fff" shape-rendering="crispEdges"/><line x1="1745.6" y1="277.6" x2="1896.4" y2="45.3" stroke="#f04444" stroke-width="2.2"/></g><g shape-rendering="crispEdges"><path d="M1645.5 45V278" stroke="#e8e800" stroke-width="1.6"/><path d="M1815.5 45V278" stroke="#7cf040" stroke-width="1"/><path d="M1840.5 45V278" stroke="#b01818" stroke-width="1"/></g><path d="M1812 168.5h8M1816 164.5v8M1813 165.5l6 6M1813 171.5l6-6" stroke="#a8e000" stroke-width="0.8"/><path d="M1836 128l7 7M1836 135l7-7M1835.5 131.5h8" stroke="#f02020" stroke-width="0.8"/><path d="M1642 231.5h7M1645.5 228v7" stroke="#e0c000" stroke-width="0.8"/><text x="1634.2" y="51.19725330483307" text-anchor="end">12</text><path d="M1637.5 47.5H1642.5" stroke="#000" stroke-width="1"/><text x="1634.2" y="100.30000000000001" text-anchor="end">1</text><path d="M1637.5 96.5H1642.5" stroke="#000" stroke-width="1"/><text x="1634.2" y="145.8" text-anchor="end">0.1</text><path d="M1637.5 141.5H1642.5" stroke="#000" stroke-width="1"/><text x="1634.2" y="191.3" text-anchor="end">0.01</text><path d="M1637.5 187.5H1642.5" stroke="#000" stroke-width="1"/><text x="1634.2" y="236.8" text-anchor="end">0.001</text><path d="M1637.5 232.5H1642.5" stroke="#000" stroke-width="1"/><text x="1634.2" y="282.29999999999995" text-anchor="end">0.0001</text><path d="M1637.5 278.5H1642.5" stroke="#000" stroke-width="1"/><path d="M1637.5 50.5H1642.5" stroke="#000" stroke-width="1"/><text x="1645.0" y="297" text-anchor="middle">0</text><path d="M1645.5 279V284" stroke="#000" stroke-width="1"/><text x="1723.3" y="297" text-anchor="middle">5E-5</text><path d="M1723.5 279V284" stroke="#000" stroke-width="1"/><text x="1801.6" y="297" text-anchor="middle">0.0001</text><path d="M1802.5 279V284" stroke="#000" stroke-width="1"/><text x="1879.9" y="297" text-anchor="middle">0.00015</text><path d="M1880.5 279V284" stroke="#000" stroke-width="1"/><text x="1958.2" y="297" text-anchor="middle">0.0002</text><path d="M1958.5 279V284" stroke="#000" stroke-width="1"/><text x="2036.5" y="297" text-anchor="middle">0.00025</text><path d="M2035.5 279V284" stroke="#000" stroke-width="1"/><text x="1839" y="314" text-anchor="middle" textLength="40.8" lengthAdjust="spacingAndGlyphs">Time (s)</text><text x="1596.5" y="162" text-anchor="middle" textLength="73.4" lengthAdjust="spacingAndGlyphs" transform="rotate(-90 1596.5 162)">Amplitude (V)</text></svg></body></html>
